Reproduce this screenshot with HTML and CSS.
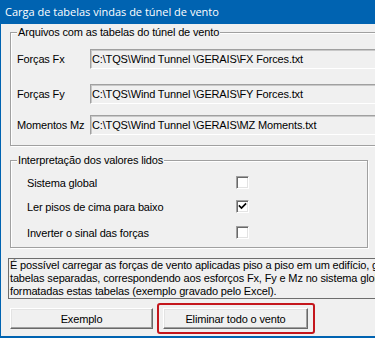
FILE: index.html
```html
<!DOCTYPE html>
<html lang="pt">

<head>
  <meta charset="UTF-8" />
  <title>Carga de tabelas vindas de túnel de vento</title>
  <link rel="stylesheet" href="styles.css">
</head>

<body>
  <div class="window">
    <div class="titlebar">Carga de tabelas vindas de túnel de vento</div>

    <div class="client">
      <!-- arquivos -->
      <div class="group group-files">
        <div class="group-title">Arquivos com as tabelas do túnel de vento</div>
        <div class="file-row row-fx">
          <span class="field-label">Forças Fx</span>
          <span class="field">C:\TQS\Wind Tunnel \GERAIS\FX Forces.txt</span>
        </div>
        <div class="file-row row-fy">
          <span class="field-label">Forças Fy</span>
          <span class="field">C:\TQS\Wind Tunnel \GERAIS\FY Forces.txt</span>
        </div>
        <div class="file-row row-mz">
          <span class="field-label">Momentos Mz</span>
          <span class="field">C:\TQS\Wind Tunnel \GERAIS\MZ Moments.txt</span>
        </div>
      </div>

      <!-- opcoes -->
      <div class="group group-options">
        <div class="group-title">Interpretação dos valores lidos</div>
        <div class="check-row row-global">
          <span class="check-label">Sistema global</span>
          <span class="checkbox"></span>
        </div>
        <div class="check-row row-pisos">
          <span class="check-label">Ler pisos de cima para baixo</span>
          <span class="checkbox">
            <svg width="11" height="11" viewBox="0 0 11 11">
              <path d="M2.5 5 L4.5 7 L8.5 3" fill="none" stroke="#000" stroke-width="1.7" stroke-linecap="square" />
            </svg>
          </span>
        </div>
        <div class="check-row row-sinal">
          <span class="check-label">Inverter o sinal das forças</span>
          <span class="checkbox"></span>
        </div>
      </div>

      <div class="notes">
        <div>É possível carregar as forças de vento aplicadas piso a piso em um edifício, gravadas em três</div>
        <div>tabelas separadas, correspondendo aos esforços Fx, Fy e Mz no sistema global. Veja como devem ser</div>
        <div>formatadas estas tabelas (exemplo gravado pelo Excel).</div>
      </div>

      <div class="buttons">
        <button class="btn btn-example">Exemplo</button>
        <div class="highlight">
          <button class="btn btn-clear">Eliminar todo o vento</button>
        </div>
      </div>
    </div>
  </div>
</body>

</html>
```

FILE: styles.css
```css
:root {
  --face: #f0f0f0;
  --shadow: #a0a0a0;
  --dark: #696969;
  --light: #e3e3e3;
  --accent: #0063b1;
}

body {
  margin: 0;
  overflow: hidden;
  background: var(--face);
}

.window {
  width: 375px;
  height: 338px;
  box-sizing: border-box;
  border-left: 1px solid var(--accent);
  border-bottom: 2px solid var(--accent);
  background: var(--face);
  overflow: hidden;
  font-family: "Liberation Sans", Arial, sans-serif;
  font-size: 11px;
  letter-spacing: -0.15px;
  color: #000;
}

.titlebar {
  height: 24px;
  line-height: 24px;
  padding-left: 4px;
  background: var(--accent);
  color: #fff;
  font-family: "Open Sans", sans-serif;
  font-size: 11px;
  letter-spacing: 0;
  white-space: nowrap;
}

.client {
  padding-left: 7px;
}

/* group boxes */
.group {
  margin-left: 2px;
  border: 1px solid var(--shadow);
  box-shadow: inset 1px 1px 0 #fff, 1px 1px 0 #fff;
}

.group-title {
  width: fit-content;
  margin: -7px 0 0 6px;
  padding: 0 1px;
  line-height: 13px;
  background: var(--face);
  white-space: nowrap;
}

.group-files {
  margin-top: 8px;
  width: 440px;
  padding-bottom: 10px;
}

.group-options {
  margin-top: 14px;
  width: 358px;
  box-sizing: border-box;
  padding-bottom: 8px;
}

/* file rows */
.file-row {
  display: flex;
  align-items: center;
  height: 20px;
  padding-left: 6px;
}

.row-fx {
  margin-top: 10px;
}

.row-fy {
  margin-top: 15px;
}

.row-mz {
  margin-top: 11px;
}

.field-label {
  flex: none;
  width: 73px;
  white-space: nowrap;
}

.field {
  flex: none;
  width: 340px;
  height: 20px;
  box-sizing: border-box;
  padding-left: 1px;
  line-height: 18px;
  border: 1px solid;
  border-color: var(--shadow) #fff #fff var(--shadow);
  box-shadow: inset 1px 1px 0 #c8c8c8;
  background: var(--face);
  white-space: nowrap;
}

/* check rows */
.check-row {
  display: flex;
  align-items: center;
  height: 13px;
  padding-left: 16px;
}

.row-global {
  margin-top: 9px;
}

.row-pisos {
  margin-top: 11px;
}

.row-sinal {
  margin-top: 13px;
}

.check-label {
  flex: none;
  width: 209px;
  white-space: nowrap;
}

.checkbox {
  flex: none;
  display: flex;
  width: 13px;
  height: 13px;
  box-sizing: border-box;
  border: 1px solid;
  border-color: var(--shadow) #fff #fff var(--shadow);
  box-shadow: inset 1px 1px 0 var(--dark), inset -1px -1px 0 var(--light);
  background: #fff;
}

.checkbox svg {
  display: block;
}

/* text */
.notes {
  margin-top: 10px;
  width: 520px;
  border: 1px solid #6d6d6d;
  padding-left: 1px;
  line-height: 13px;
  white-space: nowrap;
}

/* buttons */
.buttons {
  display: flex;
  align-items: center;
  margin-top: 4px;
}

.btn {
  height: 21px;
  padding: 0;
  font: inherit;
  letter-spacing: inherit;
  color: #000;
  background: var(--face);
  border: 1px solid;
  border-color: #fff var(--dark) var(--dark) #fff;
  box-shadow: inset -1px -1px 0 var(--shadow), inset 1px 1px 0 var(--light);
}

.btn-example {
  margin-left: 2px;
  width: 143px;
}

.btn-clear {
  display: block;
  width: 145px;
}

.highlight {
  margin-left: 4px;
  padding: 3px 5px 3px 4px;
  border: 2px solid #c4161c;
  border-radius: 3px;
}
```
